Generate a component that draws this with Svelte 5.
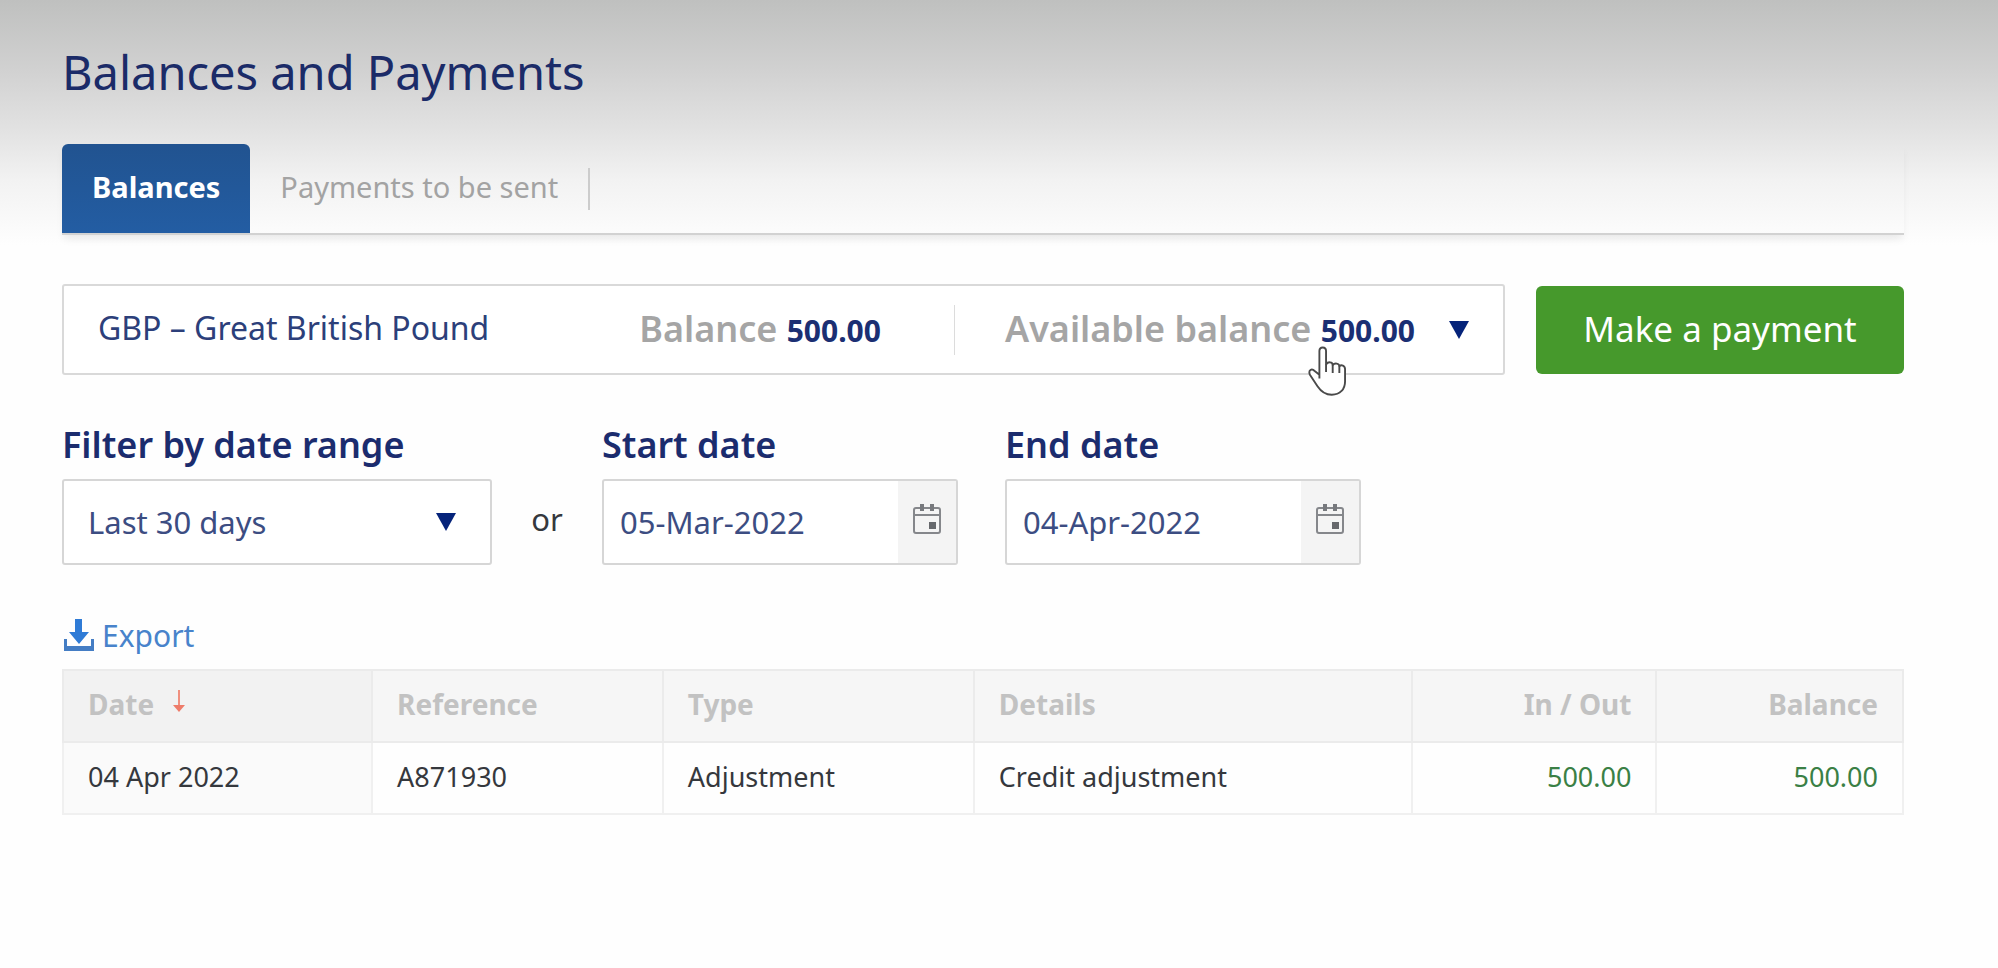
<script lang="ts">
	type Column = { key: string; label: string; amount?: boolean };

	const tabs = ['Balances', 'Payments to be sent'];
	const ranges = ['Last 30 days', 'Last 60 days', 'Last 90 days'];

	const columns: Column[] = [
		{ key: 'date', label: 'Date' },
		{ key: 'reference', label: 'Reference' },
		{ key: 'type', label: 'Type' },
		{ key: 'details', label: 'Details' },
		{ key: 'inOut', label: 'In / Out', amount: true },
		{ key: 'balance', label: 'Balance', amount: true }
	];

	const rows: Record<string, string>[] = [
		{
			date: '04 Apr 2022',
			reference: 'A871930',
			type: 'Adjustment',
			details: 'Credit adjustment',
			inOut: '500.00',
			balance: '500.00'
		}
	];

	let activeTab = $state('Balances');
	let range = $state('Last 30 days');
	let startDate = $state('05-Mar-2022');
	let endDate = $state('04-Apr-2022');
</script>

{#snippet caret()}
	<svg class="caret" viewBox="0 0 20 18" aria-hidden="true"><path d="M0 0h20L10 18z" /></svg>
{/snippet}

{#snippet calendar()}
	<svg class="calendar" viewBox="0 0 28 30" aria-hidden="true">
		<rect x="1" y="4" width="26" height="25" rx="2" fill="none" stroke="#85878b" stroke-width="2" />
		<path d="M1 11h26" stroke="#85878b" stroke-width="2" />
		<path d="M9 0v7M19 0v7" stroke="#77797d" stroke-width="4" />
		<rect x="16" y="18" width="7" height="7" fill="#66686c" />
	</svg>
{/snippet}

<main class="page">
	<h1>Balances and Payments</h1>

	<nav class="tabs">
		{#each tabs as tab}
			<button class="tab" class:active={tab === activeTab} onclick={() => (activeTab = tab)}>
				{tab}
			</button>
		{/each}
	</nav>

	<div class="account-row">
		<button class="account" aria-haspopup="listbox">
			<span class="currency">GBP – Great British Pound</span>
			<span class="figure total">Balance <b>500.00</b></span>
			<span class="figure available">Available balance <b>500.00</b></span>
			{@render caret()}
			<svg class="pointer" viewBox="0 0 40 54" aria-hidden="true">
				<path
					d="M12 35V6c0-5 7-5 7 0v14c2-3 7-3 7 1 2-3 7-2 7 1 2-2 6-1 6 3v13c0 8-5 14-14 14-7 0-11-3-15-9L2 31c-2-5 2-7 5-4l5 4"
					fill="#fff"
					stroke="#4a4a4a"
					stroke-width="2"
					stroke-linejoin="round"
				/>
				<path d="M19 20v8M26 21v8M33 22v7" fill="none" stroke="#4a4a4a" stroke-width="2" />
			</svg>
		</button>
		<button class="pay">Make a payment</button>
	</div>

	<form class="filters">
		<div class="field range">
			<label for="range">Filter by date range</label>
			<div class="control">
				<select id="range" bind:value={range}>
					{#each ranges as option}
						<option>{option}</option>
					{/each}
				</select>
				{@render caret()}
			</div>
		</div>
		<span class="or">or</span>
		<div class="field date">
			<label for="start">Start date</label>
			<div class="control">
				<input id="start" type="text" bind:value={startDate} />
				<button type="button" class="picker" aria-label="Choose start date">
					{@render calendar()}
				</button>
			</div>
		</div>
		<div class="field date">
			<label for="end">End date</label>
			<div class="control">
				<input id="end" type="text" bind:value={endDate} />
				<button type="button" class="picker" aria-label="Choose end date">
					{@render calendar()}
				</button>
			</div>
		</div>
	</form>

	<a class="export" href="#export">
		<svg viewBox="0 0 30 32" aria-hidden="true">
			<path d="M11 0h7v13h7l-10 12-10-12h6z" fill="#2f7bd6" />
			<path d="M0 20h3v7h24v-7h3v12H0z" fill="#447dc4" />
		</svg>
		Export
	</a>

	<table>
		<colgroup>
			{#each columns as column}
				<col class={column.key} />
			{/each}
		</colgroup>
		<thead>
			<tr>
				{#each columns as column}
					<th class:amount={column.amount}>
						{column.label}
						{#if column.key === 'date'}
							<svg class="sort" viewBox="0 0 12 22" aria-hidden="true">
								<path d="M6 0v16" stroke="#f0907f" stroke-width="2" />
								<path d="M0 15h12l-6 7z" fill="#ee7c6a" />
							</svg>
						{/if}
					</th>
				{/each}
			</tr>
		</thead>
		<tbody>
			{#each rows as row}
				<tr>
					{#each columns as column}
						<td class:amount={column.amount}>{row[column.key]}</td>
					{/each}
				</tr>
			{/each}
		</tbody>
	</table>
</main>

<style>
	:global(body) {
		background: #fefefe;
	}

	.page {
		box-sizing: border-box;
		min-height: 100vh;
		padding: 40px 94px 40px 62px;
		background: linear-gradient(#bfc0bf 0, #d1d1d1 70px, #e2e2e2 130px, #f2f2f2 180px, #fefefe 245px);
		color: #35383d;
		font-family: 'Noto Sans', 'Open Sans', sans-serif;
		font-size: 27px;
	}

	h1 {
		margin: 0 0 40px;
		color: #1b2b68;
		font-size: 47px;
		font-weight: 400;
		line-height: 64px;
	}

	button,
	input,
	select {
		font: inherit;
	}

	button {
		cursor: pointer;
	}

	.tabs {
		display: flex;
		align-items: center;
		border-bottom: 2px solid #d2d2d2;
		box-shadow: 0 6px 8px -2px rgba(0, 0, 0, 0.08);
	}

	.tab {
		height: 42px;
		padding: 0 30px 4px;
		border: 0;
		border-right: 2px solid #ccc;
		background: none;
		color: #a3a3a3;
		font-size: 29px;
		line-height: 38px;
	}

	.tab.active {
		height: 89px;
		border: 0;
		border-radius: 6px 6px 0 0;
		background: linear-gradient(#215390, #235da3);
		color: #fff;
		font-weight: 700;
	}

	.account-row {
		display: flex;
		align-items: center;
		gap: 31px;
		margin-top: 49px;
	}

	.account {
		position: relative;
		display: flex;
		flex: 1;
		align-items: center;
		height: 91px;
		padding: 0 34px;
		border: 2px solid #d9d9d9;
		border-radius: 3px;
		background: #fff;
		color: #2c3f7a;
		font-size: 32px;
		text-align: left;
	}

	.currency {
		flex: 1;
		padding-bottom: 4px;
	}

	.figure {
		color: #a5a5a5;
		font-size: 36px;
		font-weight: 600;
		line-height: 48px;
	}

	.figure b {
		color: #1b2f73;
		font-size: 30px;
		font-weight: 700;
	}

	.total {
		padding-right: 73px;
		border-right: 1px solid #dcdcdc;
	}

	.available {
		padding: 0 34px 0 50px;
	}

	.caret {
		width: 20px;
		height: 18px;
		fill: #05237a;
	}

	/* hand cursor resting on the available balance */
	.pointer {
		position: absolute;
		top: 59px;
		right: 157px;
		width: 38px;
		height: 52px;
	}

	.pay {
		width: 368px;
		height: 88px;
		padding: 0 0 2px;
		border: 0;
		border-radius: 6px;
		background: #46992c;
		color: #fff;
		font-size: 35px;
	}

	.filters {
		display: flex;
		align-items: flex-end;
		margin-top: 46px;
	}

	.field label {
		display: block;
		margin-bottom: 10px;
		color: #1b2c6e;
		font-size: 36px;
		font-weight: 600;
		line-height: 48px;
	}

	.control {
		display: flex;
		align-items: center;
		box-sizing: border-box;
		height: 86px;
		border: 2px solid #d6d6d6;
		border-radius: 3px;
		background: #fff;
	}

	.range {
		width: 430px;
	}

	.range .control {
		position: relative;
	}

	.range .caret {
		position: absolute;
		right: 34px;
		pointer-events: none;
	}

	.range select {
		width: 100%;
		height: 100%;
		padding: 0 24px;
		border: 0;
		background: none;
		color: #3c4d82;
		font-size: 31px;
		appearance: none;
	}

	.or {
		width: 110px;
		padding-bottom: 6px;
		line-height: 80px;
		font-size: 31px;
		text-align: center;
	}

	.date {
		flex: none;
		width: 356px;
	}

	.date + .date {
		margin-left: 47px;
	}

	.date input {
		flex: 1;
		min-width: 0;
		padding: 0 16px;
		border: 0;
		background: none;
		color: #3c4d82;
		font-size: 31px;
	}

	.picker {
		display: flex;
		align-items: center;
		justify-content: center;
		width: 58px;
		height: 100%;
		padding: 0 0 6px;
		border: 0;
		background: #f4f4f4;
	}

	.calendar {
		width: 28px;
		height: 30px;
	}

	.export {
		display: inline-flex;
		align-items: center;
		gap: 8px;
		margin: 48px 0 10px 2px;
		color: #4883cb;
		font-size: 30px;
		line-height: 46px;
		text-decoration: none;
	}

	.export svg {
		width: 30px;
		height: 32px;
		padding-bottom: 2px;
	}

	table {
		width: 100%;
		border-collapse: collapse;
		table-layout: fixed;
	}

	col.date {
		width: 16.8%;
	}

	col.reference {
		width: 15.8%;
	}

	col.type {
		width: 16.9%;
	}

	col.details {
		width: 23.8%;
	}

	col.inOut {
		width: 13.3%;
	}

	th,
	td {
		height: 72px;
		box-sizing: border-box;
		padding: 0 24px 4px;
		border: 2px solid #f0f0f0;
		text-align: left;
	}

	th {
		border-color: #ebebeb;
		background: #f6f6f6;
		color: #c2c2c2;
		font-size: 28px;
		font-weight: 700;
	}

	th:first-child {
		background: #f2f2f2;
	}

	td {
		background: #fefefe;
	}

	td:first-child {
		background: #fafafa;
	}

	.amount {
		text-align: right;
	}

	td.amount {
		color: #3a8045;
	}

	.sort {
		width: 12px;
		height: 22px;
		margin-left: 12px;
		vertical-align: 3px;
	}
</style>
